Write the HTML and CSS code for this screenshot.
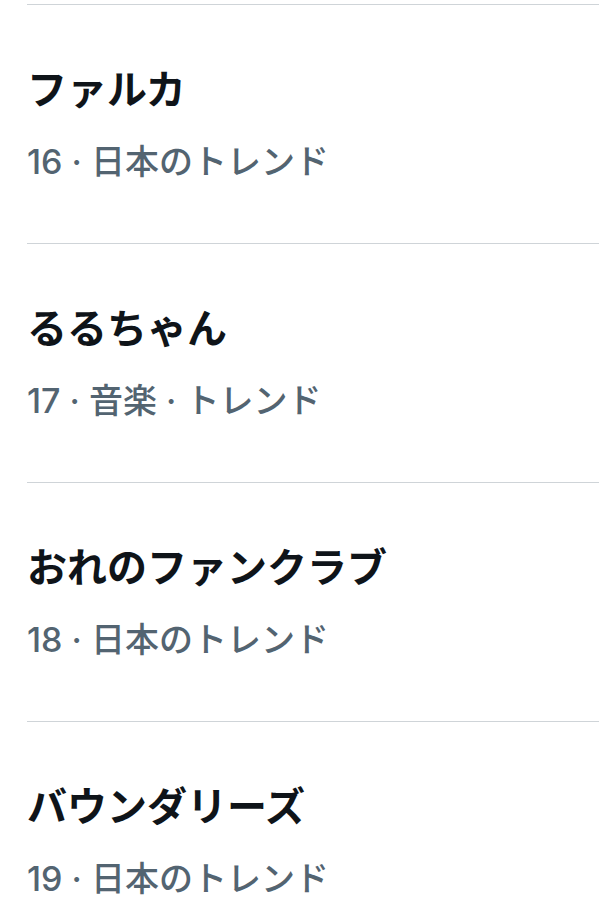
FILE: index.html
```html
<!DOCTYPE html>
<html lang="ja">
<head>
    <meta charset="UTF-8">
    <meta name="viewport" content="width=device-width, initial-scale=1.0">
    <title>トレンド</title>
    <link rel="stylesheet" href="styles.css">
</head>
<body>
    <div class="trend-list">
        <div class="trend-item">
            <div class="trend-name">ファルカ</div>
            <div class="trend-meta">16 · 日本のトレンド</div>
        </div>
        <div class="trend-item">
            <div class="trend-name">るるちゃん</div>
            <div class="trend-meta">17 · 音楽 · トレンド</div>
        </div>
        <div class="trend-item">
            <div class="trend-name">おれのファンクラブ</div>
            <div class="trend-meta">18 · 日本のトレンド</div>
        </div>
        <div class="trend-item">
            <div class="trend-name">バウンダリーズ</div>
            <div class="trend-meta">19 · 日本のトレンド</div>
        </div>
    </div>
</body>
</html>
```

FILE: styles.css
```css
body {
    margin: 0;
    background: #fff;
    font-family: Inter, "Noto Sans CJK JP", sans-serif;
}
.trend-list {
    padding-top: 4px;
    padding-left: 27px;
}
.trend-item {
    border-top: 1px solid #cfd4d8;
    padding: 60px 0 60px 0;
}
.trend-name {
    font-size: 40px;
    font-weight: 700;
    line-height: 50px;
    color: #0f1419;
}
.trend-meta {
    margin-top: 26px;
    font-size: 34px;
    font-weight: 500;
    line-height: 42px;
    color: #536471;
}
```
